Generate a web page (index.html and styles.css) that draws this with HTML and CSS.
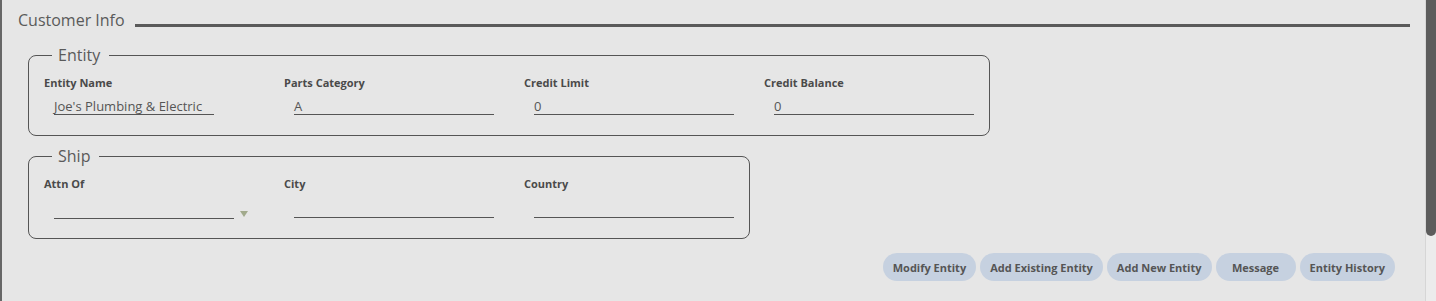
FILE: index.html
```html
<!DOCTYPE html>
<html lang="en">
<head>
<meta charset="utf-8">
<title>Customer Info</title>
<link rel="stylesheet" href="styles.css">
</head>
<body>
<div class="frame">
  <div class="edge"></div>
  <main class="main">
    <div class="title-row">
      <span class="title">Customer Info</span>
      <span class="title-rule"></span>
    </div>

    <fieldset class="group">
      <legend>Entity</legend>
      <div class="fields">
        <div class="field">
          <label>Entity Name</label>
          <div class="input narrow">Joe's Plumbing &amp; Electric</div>
        </div>
        <div class="field">
          <label>Parts Category</label>
          <div class="input">A</div>
        </div>
        <div class="field">
          <label>Credit Limit</label>
          <div class="input">0</div>
        </div>
        <div class="field">
          <label>Credit Balance</label>
          <div class="input">0</div>
        </div>
      </div>
    </fieldset>

    <fieldset class="group ship">
      <legend>Ship</legend>
      <div class="fields">
        <div class="field">
          <label>Attn Of</label>
          <div class="select-wrap">
            <div class="input select tall"></div>
            <span class="caret"></span>
          </div>
        </div>
        <div class="field">
          <label>City</label>
          <div class="input tall-1"></div>
        </div>
        <div class="field">
          <label>Country</label>
          <div class="input tall-1"></div>
        </div>
      </div>
    </fieldset>

    <div class="actions">
      <button class="btn">Modify Entity</button>
      <button class="btn">Add Existing Entity</button>
      <button class="btn">Add New Entity</button>
      <button class="btn">Message</button>
      <button class="btn">Entity History</button>
    </div>
  </main>
  <div class="scrollbar"><div class="thumb"></div></div>
</div>
</body>
</html>
```

FILE: styles.css
```css
* { box-sizing: border-box; }

html, body {
  margin: 0;
  padding: 0;
  height: 100%;
  background: #e6e6e6;
  font-family: "Open Sans", "Noto Sans", sans-serif;
  color: #555;
}

.frame {
  display: flex;
  height: 301px;
  overflow: hidden;
}

.edge {
  width: 2px;
  background: #676767;
  flex: none;
}

.main {
  flex: 1;
  padding: 9px 15px 0 16px;
}

.title-row {
  display: flex;
  align-items: flex-end;
  height: 22px;
}

.title {
  font-size: 16px;
  line-height: 22px;
  color: #5a5a5a;
}

.title-rule {
  flex: 1;
  height: 3px;
  background: #5a5a5a;
  margin: 0 0 4px 10px;
}

.group {
  width: fit-content;
  margin: 13px 0 0 10px;
  padding: 9px 15px 20px 15px;
  border: 1px solid #555;
  border-radius: 8px;
}

.group legend {
  font-size: 16px;
  line-height: 22px;
  color: #5a5a5a;
  margin-left: 8px;
  padding: 0 9px 0 6px;
}

.group.ship {
  margin-top: 9px;
  padding-top: 9px;
  padding-bottom: 19px;
}

.fields {
  display: flex;
}

.field {
  width: 240px;
  flex: none;
}

.field:last-child {
  width: 210px;
}

.field label {
  display: block;
  font-size: 11px;
  font-weight: 700;
  line-height: 15px;
  color: #4a4a4a;
}

.input {
  margin: 8px 0 0 10px;
  width: 200px;
  height: 17px;
  font-size: 13px;
  line-height: 16px;
  color: #555;
  border-bottom: 1px solid #555;
  white-space: nowrap;
}

.input.narrow { width: 160px; }
.input.select { width: 180px; }
.input.tall { height: 19px; margin-top: 9px; }
.input.tall-1 { height: 18px; margin-top: 9px; }

.select-wrap {
  display: flex;
  align-items: flex-start;
}

.caret {
  width: 0;
  height: 0;
  margin: 20px 0 0 6px;
  border-left: 4px solid transparent;
  border-right: 4px solid transparent;
  border-top: 6px solid #a2aa8c;
}

.actions {
  display: flex;
  justify-content: flex-end;
  gap: 4px;
  margin: 14px 15px 0 0;
}

.btn {
  height: 28px;
  min-width: 80px;
  padding: 0 10px;
  border: none;
  border-radius: 14px;
  background: #c6d1e0;
  color: #555;
  font-family: "Open Sans", "Noto Sans", sans-serif;
  font-size: 11px;
  font-weight: 700;
}

.scrollbar {
  width: 11px;
  flex: none;
  background: #ececec;
  border-left: 1px solid #d6d6d6;
}

.thumb {
  height: 236px;
  background: #5c5c5c;
  border-radius: 0 0 5px 5px;
}
```
